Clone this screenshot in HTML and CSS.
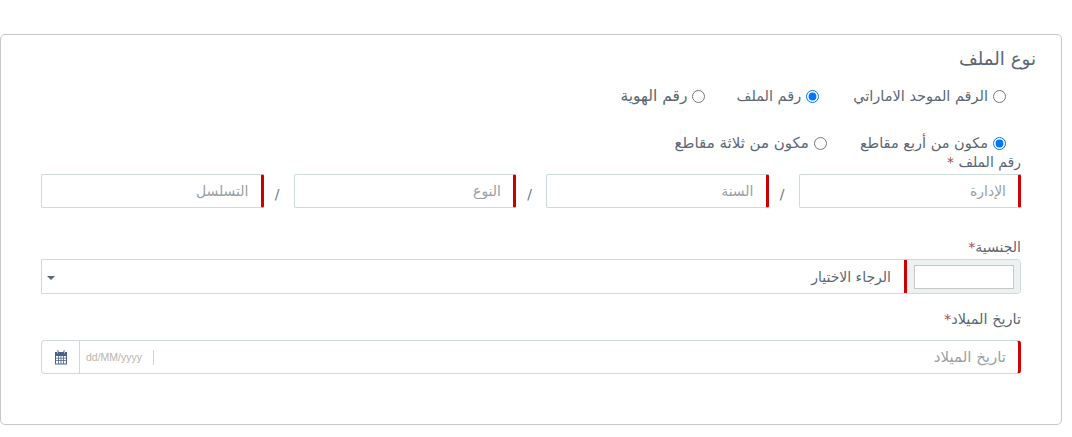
FILE: index.html
```html
<!DOCTYPE html>
<html lang="ar" dir="rtl">
<head>
<meta charset="utf-8">
<title>نوع الملف</title>
<link rel="stylesheet" href="styles.css">
</head>
<body>
<section class="card">
  <h2 class="title">نوع الملف</h2>
  <div class="radios first">
    <label class="radio"><input type="radio" name="a"><span>الرقم الموحد الاماراتي</span></label>
    <label class="radio"><input type="radio" name="a" checked><span>رقم الملف</span></label>
    <label class="radio id"><input type="radio" name="a"><span>رقم الهوية</span></label>
  </div>
  <div class="radios second">
    <label class="radio"><input type="radio" name="b" checked><span>مكون من أربع مقاطع</span></label>
    <label class="radio three"><input type="radio" name="b"><span>مكون من ثلاثة مقاطع</span></label>
  </div>
  <div class="label tight">رقم الملف <span class="req">*</span></div>
  <div class="segments">
    <input class="field" type="text" placeholder="الإدارة">
    <span class="slash">/</span>
    <input class="field" type="text" placeholder="السنة">
    <span class="slash">/</span>
    <input class="field" type="text" placeholder="النوع">
    <span class="slash">/</span>
    <input class="field" type="text" placeholder="التسلسل">
  </div>
  <div class="label nat">الجنسية<span class="req">*</span></div>
  <div class="select">
    <div class="flag"><span class="flagbox"></span></div>
    <div class="selected">الرجاء الاختيار</div>
    <span class="caret"></span>
  </div>
  <div class="label dob">تاريخ الميلاد<span class="req">*</span></div>
  <div class="date">
    <input class="dateinput" type="text" placeholder="تاريخ الميلاد">
    <span class="mask">dd/MM/yyyy</span>
    <span class="cal">
      <svg width="14" height="15" viewBox="0 0 14 15" aria-hidden="true">
        <path fill="#4a5f8a" d="M1 2h2V0.500h1.600V2h4.800V0.500H11V2h2v12.500H1z"/>
        <path fill="#fff" d="M2 6h2.200v1.700H2zm3 0h1.600v1.700H5zm2.400 0H9v1.700H7.400zm2.400 0H12v1.700H9.800zM2 8.500h2.200v1.700H2zm3 0h1.600v1.700H5zm2.400 0H9v1.700H7.400zm2.400 0H12v1.700H9.800zM2 11h2.200v2.500H2zm3 0h1.600v2.500H5zm2.400 0H9v2.500H7.400zm2.400 0H12v2.500H9.800z"/>
        <path fill="#fff" d="M3.300 1h.6v2.600h-.6zM10 1h.6v2.600H10z"/>
      </svg>
    </span>
  </div>
</section>
</body>
</html>
```

FILE: styles.css
```css
* { box-sizing: border-box; }
html, body { margin: 0; background: #fff; }
body {
  width: 1072px;
  height: 437px;
  overflow: hidden;
  padding: 34px 10px 0 0;
  font-family: "DejaVu Sans", "Noto Sans", sans-serif;
  color: #5b6674;
  font-size: 14px;
}
.card {
  height: 391px;
  border: 1px solid #c8c8c8;
  border-radius: 5px;
  padding: 12px 40px 0 40px;
  display: flow-root;
}
.title {
  margin: 0 -15px 0 0;
  font-size: 18.200px;
  font-weight: 400;
  line-height: 24px;
  color: #5b6674;
}
.radios { display: flex; padding-right: 15px; font-size: 14.500px; }
.first { margin: 13px 0 0; gap: 34px; height: 24px; }
.second { margin: 23px 0 0; gap: 33px; height: 24px; }
.radio { display: flex; align-items: center; gap: 5px; line-height: 24px; white-space: nowrap; }
.radio input { width: 13px; height: 13px; margin: 0; accent-color: #0075ff; }
.id { margin-right: -3px; font-size: 15.500px; }
.three { font-size: 15px; }
.label { line-height: 20px; color: #5b6674; }
.tight { margin-top: -2px; height: 21px; line-height: 18px; }
.req { color: #b5483f; }
.segments { display: flex; align-items: stretch; height: 34px; }
.field {
  flex: 1 1 0;
  min-width: 0;
  height: 34px;
  border: 1px solid #cfdbdb;
  border-right: 3px solid #cc0000;
  border-radius: 2px;
  padding: 0 12px;
  font: 14px "DejaVu Sans", sans-serif;
  color: #5b6674;
  background: #fff;
  outline: 0;
}
.field::placeholder, .dateinput::placeholder { color: #9a9fa5; opacity: 1; }
.slash { width: 30px; padding-right: 3px; text-align: center; line-height: 40px; color: #6b7683; }
.nat { margin-top: 29px; height: 22px; }
.select {
  display: flex;
  align-items: center;
  height: 35px;
  border: 1px solid #cfdbdb;
  border-radius: 0 4px 4px 0;
}
.flag {
  width: 116px;
  height: 33px;
  background: #eef1f2;
  border-left: 3px solid #cc0000;
  display: flex;
  align-items: center;
  justify-content: center;
  border-radius: 0 4px 4px 0;
}
.flagbox { width: 100px; height: 24px; border: 1px solid #c8c8c8; background: #fff; }
.selected { flex: 1; padding-right: 13px; color: #5b6674; }
.caret {
  width: 0; height: 0;
  margin-left: 5px;
  margin-top: 2px;
  border: 4px solid transparent;
  border-top: 4px solid #5b6674;
  border-bottom: 0;
}
.dob { margin-top: 15px; height: 31px; font-size: 14.500px; }
.date {
  display: flex;
  align-items: center;
  height: 34px;
  border: 1px solid #cfdbdb;
  border-right: 3px solid #cc0000;
  border-radius: 4px;
}
.dateinput {
  flex: 1;
  min-width: 0;
  height: 32px;
  border: 0;
  padding: 0 12px;
  font: 15px "DejaVu Sans", sans-serif;
  outline: 0;
  background: transparent;
}
.mask {
  direction: ltr;
  width: 74px;
  height: 15px;
  border-right: 1px solid #d5d5d5;
  padding-left: 6px;
  font: 10.500px/15px "Liberation Sans", sans-serif;
  color: #bdb3ab;
}
.cal {
  width: 38px;
  height: 32px;
  border-right: 1px solid #cfdbdb;
  display: flex;
  align-items: center;
  justify-content: center;
}
```
